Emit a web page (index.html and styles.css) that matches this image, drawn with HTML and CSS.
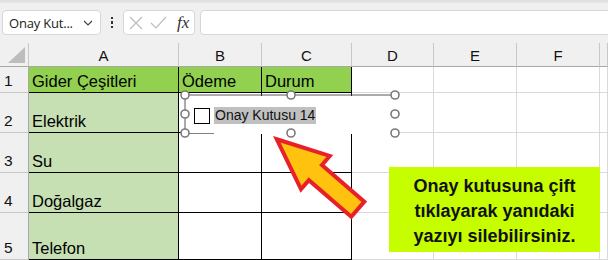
FILE: index.html
```html
<!DOCTYPE html>
<html lang="tr">

<head>
    <meta charset="UTF-8" />
    <title>Onay Kutusu</title>
    <link rel="stylesheet" href="styles.css">
</head>

<body>

    <div class="topbar"></div>

    <!-- Formül çubuğu -->
    <div class="formula-row">
        <div class="name-box">
            <span>Onay Kut...</span>
            <svg class="chevron" width="10" height="6" viewBox="0 0 10 6">
                <polyline points="1,1 5,5 9,1" fill="none" stroke="#444" stroke-width="1.2" />
            </svg>
        </div>
        <div class="dots"><span></span><span></span><span></span></div>
        <div class="fx-buttons">
            <svg width="14" height="14" viewBox="0 0 14 14">
                <path d="M1,1 L13,13 M13,1 L1,13" stroke="#bdbdbd" stroke-width="1.2" />
            </svg>
            <svg width="17" height="13" viewBox="0 0 17 13">
                <polyline points="1,7 6,12 16,1" fill="none" stroke="#bdbdbd" stroke-width="1.2" />
            </svg>
            <i class="fx">fx</i>
        </div>
        <div class="formula-input"></div>
    </div>

    <!-- Sayfa -->
    <div class="sheet">
        <div class="grid">
            <div class="corner"><span class="tri"></span></div>
            <div class="ch">A</div>
            <div class="ch">B</div>
            <div class="ch">C</div>
            <div class="ch">D</div>
            <div class="ch">E</div>
            <div class="ch">F</div>
            <div class="ch"></div>

            <div class="rh">1</div>
            <div class="c g1">Gider Çeşitleri</div>
            <div class="c g1">Ödeme</div>
            <div class="c g1">Durum</div>
            <div class="c"></div>
            <div class="c"></div>
            <div class="c"></div>
            <div class="c"></div>

            <div class="rh">2</div>
            <div class="c g2">Elektrik</div>
            <div class="c b"></div>
            <div class="c b"></div>
            <div class="c"></div>
            <div class="c"></div>
            <div class="c"></div>
            <div class="c"></div>

            <div class="rh">3</div>
            <div class="c g2">Su</div>
            <div class="c b"></div>
            <div class="c b"></div>
            <div class="c"></div>
            <div class="c"></div>
            <div class="c"></div>
            <div class="c"></div>

            <div class="rh">4</div>
            <div class="c g2">Doğalgaz</div>
            <div class="c b"></div>
            <div class="c b"></div>
            <div class="c"></div>
            <div class="c"></div>
            <div class="c"></div>
            <div class="c"></div>

            <div class="rh">5</div>
            <div class="c g2">Telefon</div>
            <div class="c b"></div>
            <div class="c b"></div>
            <div class="c"></div>
            <div class="c"></div>
            <div class="c"></div>
            <div class="c"></div>
        </div>

        <!-- Onay kutusu denetimi (seçili) -->
        <div class="checkbox-control">
            <span class="box"></span>
            <span class="label">Onay Kutusu 14</span>
        </div>
        <svg class="handles" width="224" height="50" viewBox="0 0 224 50">
            <line x1="5" y1="5" x2="215" y2="5" stroke="#595959" stroke-width="1" />
            <line x1="5" y1="5" x2="5" y2="43" stroke="#595959" stroke-width="1" />
            <line x1="5" y1="43.5" x2="34" y2="43.5" stroke="#808080" stroke-width="1" />
            <g fill="#fff" stroke="#7a7a7a" stroke-width="1.6">
                <circle cx="5" cy="5" r="4" />
                <circle cx="111" cy="5" r="4" />
                <circle cx="215" cy="5" r="4" />
                <circle cx="5" cy="24" r="4" />
                <circle cx="215" cy="24" r="4" />
                <circle cx="5" cy="43" r="4" />
                <circle cx="111" cy="43" r="4" />
                <circle cx="215" cy="43" r="4" />
            </g>
        </svg>

        <!-- Ok -->
        <svg class="arrow" width="120" height="105" viewBox="0 0 120 105">
            <g transform="translate(13,11) rotate(40.8)">
                <polygon points="5,0 56,-22 56,-10 112,-10 112,10 56,10 56,22"
                    fill="#ffc20e" stroke="#e8202a" stroke-width="4" stroke-linejoin="miter" />
            </g>
        </svg>

        <!-- Açıklama kutusu -->
        <div class="note">Onay kutusuna çift<br>tıklayarak yanıdaki<br>yazıyı silebilirsiniz.</div>
    </div>

</body>

</html>
```

FILE: styles.css
```css
body {
    margin: 0;
    width: 608px;
    height: 260px;
    overflow: hidden;
    background: #f0f0f0;
    font-family: "Liberation Sans", Arial, sans-serif;
}

.topbar {
    height: 3px;
    background: linear-gradient(#dedede, #e8e8e8);
}

/* Formül çubuğu */
.formula-row {
    display: flex;
    align-items: stretch;
    height: 25px;
    padding: 7px 0 8px 2px;
}

.name-box,
.fx-buttons,
.formula-input {
    background: #fff;
    border: 1px solid #d6d6d6;
    border-radius: 4px;
    box-sizing: border-box;
}

.name-box {
    width: 99px;
    display: flex;
    align-items: center;
    justify-content: space-between;
    padding: 0 7px 0 6px;
    font-family: "Open Sans", sans-serif;
    font-size: 13px;
    letter-spacing: -0.2px;
    color: #222;
}

.chevron {
    margin-top: 1px;
}

.dots {
    width: 22px;
    display: flex;
    flex-direction: column;
    align-items: center;
    justify-content: center;
    gap: 2px;
}

.dots span {
    width: 2.5px;
    height: 2.5px;
    background: #333;
}

.fx-buttons {
    width: 72px;
    display: flex;
    align-items: center;
    gap: 7px;
    padding-left: 5px;
}

.fx {
    font-family: "Liberation Serif", serif;
    font-size: 17px;
    color: #333;
    margin-left: 3px;
}

.formula-input {
    flex: 1;
    margin: 0 -6px 0 5px;
}

/* Sayfa */
.sheet {
    position: relative;
}

.grid {
    display: grid;
    grid-template-columns: 29px 150px 83px 90px 82px 83px 83px 8px;
    grid-template-rows: 24px 26px 40px 40px 40px 47px;
}

.grid > div {
    box-sizing: border-box;
}

.corner {
    position: relative;
    border-right: 1px solid #c8c8c8;
    border-bottom: 1px solid #a8a8a8;
}

.tri {
    position: absolute;
    right: 3px;
    bottom: 3px;
    width: 0;
    height: 0;
    border-left: 17px solid transparent;
    border-bottom: 16px solid #bdbdbd;
}

.ch {
    display: flex;
    align-items: center;
    justify-content: center;
    font-size: 15px;
    color: #111;
    border-right: 1px solid #c8c8c8;
    border-bottom: 1px solid #a8a8a8;
    padding-top: 2px;
}

.rh {
    display: flex;
    align-items: flex-end;
    padding: 0 0 2px 4px;
    font-size: 15.5px;
    color: #111;
    border-right: 1px solid #a8a8a8;
    border-bottom: 1px solid #c8c8c8;
}

.c {
    display: flex;
    align-items: flex-end;
    padding: 0 0 1px 3px;
    font-size: 16.5px;
    color: #000;
    background: #fff;
    border-right: 1px solid #d9d9d9;
    border-bottom: 1px solid #d9d9d9;
}

.c.g1,
.c.g2,
.c.b {
    border-right-color: #000;
    border-bottom-color: #000;
}

.c.g1 {
    background: #92d050;
}

.c.g2 {
    background: #c6e0b4;
}

/* Onay kutusu denetimi */
.checkbox-control {
    position: absolute;
    left: 186px;
    top: 53px;
    width: 209px;
    height: 38px;
    background: #fff;
    display: flex;
    align-items: center;
    padding-left: 8px;
    box-sizing: border-box;
}

.checkbox-control .box {
    width: 16px;
    height: 16px;
    border: 1px solid #000;
    box-sizing: border-box;
    margin-top: 1px;
}

.checkbox-control .label {
    margin-left: 4px;
    padding: 0 1px;
    background: #c0c0c0;
    font-size: 14px;
    line-height: 17px;
    color: #111;
}

.handles {
    position: absolute;
    left: 180px;
    top: 47px;
}

.arrow {
    position: absolute;
    left: 260px;
    top: 82px;
}

/* Açıklama kutusu */
.note {
    position: absolute;
    left: 389px;
    top: 124px;
    width: 211px;
    height: 85px;
    box-sizing: border-box;
    padding-top: 7px;
    background: #c6fe00;
    text-align: center;
    font-weight: bold;
    font-size: 18px;
    line-height: 25px;
    color: #111;
}
```
